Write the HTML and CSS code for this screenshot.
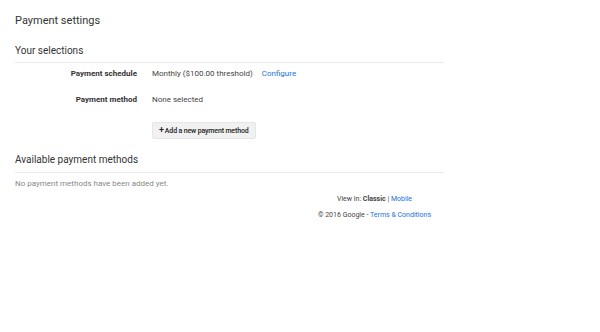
FILE: index.html
```html
<!DOCTYPE html>
<html lang="en">
<head>
  <meta charset="UTF-8">
  <title>Payment settings</title>
  <link rel="stylesheet" href="styles.css">
</head>
<body>
  <div class="page">
    <h1>Payment settings</h1>

    <section class="block">
      <h2>Your selections</h2>
      <div class="row first">
        <div class="label">Payment schedule</div>
        <div class="value">Monthly ($100.00 threshold) <a href="#" class="link configure">Configure</a></div>
      </div>
      <div class="row">
        <div class="label">Payment method</div>
        <div class="value">None selected</div>
      </div>
      <div class="row btn-row">
        <div class="label"></div>
        <div class="value"><button class="add-btn"><span class="plus">+</span>Add a new payment method</button></div>
      </div>
    </section>

    <section class="block available">
      <h2>Available payment methods</h2>
      <p class="empty">No payment methods have been added yet.</p>
    </section>

    <footer>
      <div class="foot-box">
        <div>View in: <b>Classic</b> | <a href="#" class="link">Mobile</a></div>
        <div class="copy">© 2016 Google - <a href="#" class="link">Terms &amp; Conditions</a></div>
      </div>
    </footer>
  </div>
</body>
</html>
```

FILE: styles.css
```css
* { margin: 0; padding: 0; box-sizing: border-box; }
body {
  background: #fff;
  color: #333;
  font-family: Roboto, "Liberation Sans", Arial, sans-serif;
}
.page {
  width: 429px;
  margin-left: 15px;
  padding-top: 14px;
}
h1 {
  font-size: 11px;
  font-weight: 400;
  color: #333;
  line-height: 14px;
}
h2 {
  font-size: 10px;
  font-weight: 400;
  color: #333;
  line-height: 14px;
  padding-bottom: 4px;
  border-bottom: 1px solid #ebebeb;
}
.block { margin-top: 16px; }
.row {
  display: flex;
  align-items: center;
  font-size: 8px;
  line-height: 12px;
  margin-top: 14px;
}
.row.first { margin-top: 5px; }
.row.btn-row { margin-top: 16px; }
.label {
  width: 122px;
  text-align: right;
  font-weight: bold;
  color: #333;
}
.value {
  padding-left: 15px;
  color: #444;
}
.configure { margin-left: 7px; }
a.link { color: #1a73d8; text-decoration: none; }
.add-btn {
  display: block;
  height: 17px;
  font-family: inherit;
  font-size: 7px;
  line-height: 15px;
  font-weight: 500;
  letter-spacing: -0.15px;
  color: #222;
  background: #f1f1f1;
  border: 1px solid #e6e6e6;
  border-radius: 2px;
  padding: 0 6px;
}
.plus { font-size: 9px; margin-right: 1px; }
.block.available { margin-top: 14px; }
.available h2 { padding-bottom: 5px; }
.empty {
  font-size: 8px;
  line-height: 10px;
  color: #888;
  margin-top: 6px;
}
footer {
  display: flex;
  justify-content: flex-end;
  font-size: 7px;
  line-height: 10px;
  color: #444;
}
.foot-box {
  width: 139px;
  text-align: center;
  margin-top: 5px;
}
.copy { margin-top: 6px; }
```
